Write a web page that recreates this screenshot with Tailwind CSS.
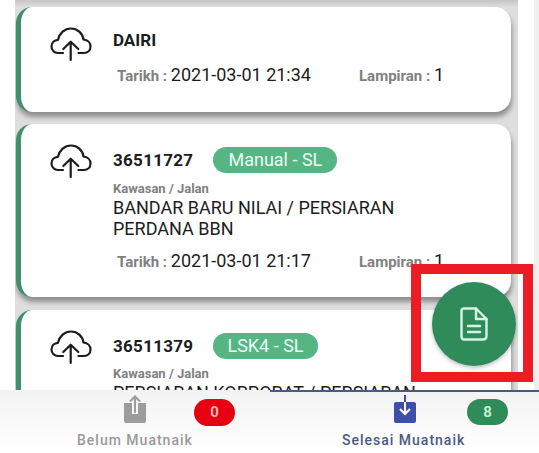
<!DOCTYPE html>
<html lang="en">

<head>
    <meta charset="UTF-8" />
    <title>Muatnaik</title>
    <script src="https://cdn.jsdelivr.net/npm/@tailwindcss/browser@4"></script>
</head>

<body class="bg-white font-['Roboto',sans-serif] text-[#1c1c1c]">
    <div class="relative w-[539px] h-[453px] overflow-hidden bg-white">

        <!-- List -->
        <div class="h-[390px] overflow-hidden flex">
            <div class="ml-[15px] w-[503px] h-[390px] overflow-hidden bg-[#dedede]">
                <div class="h-[7px] bg-gradient-to-b from-[#c4c4c4] to-[#dedede]"></div>

                <!-- Card 1 -->
                <div class="w-[495px] h-[105px] ml-px bg-white rounded-[16px] border-l-[5px] border-[#3f8f68] shadow-[1px_5px_5px_#8f8f8f] flex">
                    <div class="w-[92px] pl-[29px] pt-[20px]">
                        <svg class="w-[42px] h-[36px]" viewBox="0 0 42 36" fill="none" stroke="#1c1c1c" stroke-width="2.2" stroke-linecap="round" stroke-linejoin="round">
                            <path d="M13 26H8C4.200 26 1.500 23 1.500 19.500C1.500 15.800 4.300 13 8 12.800C9.500 6 14.500 1.500 21 1.500C27.500 1.500 32.500 6 33.500 12.500C37.500 13 40.500 15.800 40.500 19.500C40.500 23.500 37.500 26 34 26H28.500" />
                            <path d="M20.700 33V15M13.300 22L20.700 14.700L28.300 22" />
                        </svg>
                    </div>
                    <div class="pt-[23px]">
                        <div class="text-[17px] leading-[20px] font-bold">DAIRI</div>
                        <div class="mt-[11px] ml-[4px] flex items-baseline">
                            <span class="w-[242px] whitespace-nowrap"><span class="text-[15px] font-bold text-[#808080]">Tarikh : </span><span class="text-[18px]">2021-03-01 21:34</span></span>
                            <span class="whitespace-nowrap"><span class="text-[15px] font-bold text-[#808080]">Lampiran : </span><span class="text-[18px]">1</span></span>
                        </div>
                    </div>
                </div>

                <!-- Card 2 -->
                <div class="w-[495px] h-[173px] mt-[12px] ml-px bg-white rounded-[16px] border-l-[5px] border-[#3f8f68] shadow-[1px_5px_5px_#8f8f8f] flex">
                    <div class="w-[92px] pl-[29px] pt-[20px]">
                        <svg class="w-[42px] h-[36px]" viewBox="0 0 42 36" fill="none" stroke="#1c1c1c" stroke-width="2.2" stroke-linecap="round" stroke-linejoin="round">
                            <path d="M13 26H8C4.200 26 1.500 23 1.500 19.500C1.500 15.800 4.300 13 8 12.800C9.500 6 14.500 1.500 21 1.500C27.500 1.500 32.500 6 33.500 12.500C37.500 13 40.500 15.800 40.500 19.500C40.500 23.500 37.500 26 34 26H28.500" />
                            <path d="M20.700 33V15M13.300 22L20.700 14.700L28.300 22" />
                        </svg>
                    </div>
                    <div class="pt-[23px]">
                        <div class="flex items-center gap-[20px]">
                            <span class="text-[17px] leading-[26px] font-bold tracking-[0.3px]">36511727</span>
                            <span class="h-[26px] px-[15px] rounded-full bg-[#55b583] text-[#eafff3] text-[18px] leading-[26px]">Manual - SL</span>
                        </div>
                        <div class="mt-[8px] text-[13px] leading-[16px] font-bold text-[#808080]">Kawasan / Jalan</div>
                        <div class="w-[300px] text-[18px] leading-[21px]">BANDAR BARU NILAI / PERSIARAN PERDANA BBN</div>
                        <div class="mt-[8px] ml-[4px] flex items-baseline">
                            <span class="w-[242px] whitespace-nowrap"><span class="text-[15px] font-bold text-[#808080]">Tarikh : </span><span class="text-[18px]">2021-03-01 21:17</span></span>
                            <span class="whitespace-nowrap"><span class="text-[15px] font-bold text-[#808080]">Lampiran : </span><span class="text-[18px]">1</span></span>
                        </div>
                    </div>
                </div>

                <!-- Card 3 -->
                <div class="w-[495px] h-[173px] mt-[13px] ml-px bg-white rounded-[16px] border-l-[5px] border-[#3f8f68] shadow-[1px_5px_5px_#8f8f8f] flex">
                    <div class="w-[92px] pl-[29px] pt-[20px]">
                        <svg class="w-[42px] h-[36px]" viewBox="0 0 42 36" fill="none" stroke="#1c1c1c" stroke-width="2.2" stroke-linecap="round" stroke-linejoin="round">
                            <path d="M13 26H8C4.200 26 1.500 23 1.500 19.500C1.500 15.800 4.300 13 8 12.800C9.500 6 14.500 1.500 21 1.500C27.500 1.500 32.500 6 33.500 12.500C37.500 13 40.500 15.800 40.500 19.500C40.500 23.500 37.500 26 34 26H28.500" />
                            <path d="M20.700 33V15M13.300 22L20.700 14.700L28.300 22" />
                        </svg>
                    </div>
                    <div class="pt-[23px]">
                        <div class="flex items-center gap-[20px]">
                            <span class="text-[17px] leading-[26px] font-bold tracking-[0.3px]">36511379</span>
                            <span class="h-[26px] px-[14px] rounded-full bg-[#55b583] text-[#eafff3] text-[18px] leading-[26px]">LSK4 - SL</span>
                        </div>
                        <div class="mt-[7px] text-[13px] leading-[16px] font-bold text-[#808080]">Kawasan / Jalan</div>
                        <div class="w-[320px] text-[18px] leading-[21px]">PERSIARAN KORPORAT / PERSIARAN</div>
                    </div>
                </div>
            </div>
            <div class="ml-[16px] w-[5px] h-[390px] bg-[#efefef]"></div>
        </div>

        <!-- Bottom tabs -->
        <div class="flex h-[63px] bg-gradient-to-b from-[#f3f3f3] to-white">
            <div class="w-[270px] pt-[5px]">
                <div class="flex h-[31px] items-start pl-[124px]">
                    <svg class="w-[22px] h-[28px]" viewBox="0 0 22 28">
                        <path d="M0 8H8V19H14V8H22V26C22 27 21 28 20 28H2C1 28 0 27 0 26Z" fill="#9c9c9c" />
                        <path d="M11 18V1.500M6 6.500L11 1.500L16 6.500" fill="none" stroke="#9c9c9c" stroke-width="2" />
                    </svg>
                    <span class="ml-[48px] mt-[4px] w-[41px] h-[27px] rounded-full bg-[#e60012] text-[#ffb3b3] text-[15px] leading-[27px] font-bold text-center">0</span>
                </div>
                <div class="mt-[5px] pl-[77px] text-[14px] leading-[18px] font-medium tracking-[1px] text-[#9a9a9a] whitespace-nowrap">Belum Muatnaik</div>
            </div>
            <div class="w-[269px] border-t-2 border-[#4a5a85] pt-[3px]">
                <div class="flex h-[31px] items-start pl-[124px]">
                    <svg class="w-[22px] h-[28px]" viewBox="0 0 22 28">
                        <rect x="0" y="7" width="22" height="21" rx="2" fill="#3d4fa8" />
                        <path d="M11 0V19M6 14L11 19L16 14" fill="none" stroke="white" stroke-width="2" />
                        <path d="M11 0V7" fill="none" stroke="#3d4fa8" stroke-width="2" />
                    </svg>
                    <span class="ml-[51px] mt-[4px] w-[41px] h-[26px] rounded-full bg-[#2f8c5a] text-[#c4efd6] text-[15px] leading-[26px] font-bold text-center">8</span>
                </div>
                <div class="mt-[5px] pl-[72px] text-[14px] leading-[18px] font-medium tracking-[1px] text-[#4a5a85] whitespace-nowrap">Selesai Muatnaik</div>
            </div>
        </div>

        <!-- Red highlight box -->
        <div class="absolute left-[411px] top-[264px] w-[122px] h-[118px] border-[10px] border-[#ed1c24]"></div>

        <!-- FAB -->
        <div class="absolute left-[432px] top-[282px] w-[84px] h-[84px] rounded-full bg-[#2f8c5a] shadow-[0_2px_4px_rgba(0,0,0,0.25)] flex items-center justify-center">
            <svg class="w-[28px] h-[34px]" viewBox="0 0 28 34" fill="none" stroke="#d6f3e3" stroke-width="2.400" stroke-linecap="round" stroke-linejoin="round">
                <path d="M4 1.500H16L26.500 12V29C26.500 31 25 32.500 23 32.500H4C2.500 32.500 1.500 31 1.500 29V4C1.500 2.500 2.500 1.500 4 1.500Z" />
                <path d="M16 1.500V12H26.500" />
                <path d="M8 19H20M8 25H20" />
            </svg>
        </div>
    </div>
</body>

</html>
